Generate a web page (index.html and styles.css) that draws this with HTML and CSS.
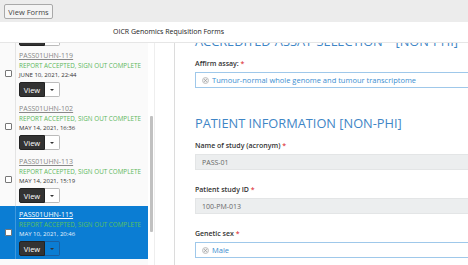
FILE: index.html
```html
<!DOCTYPE html>
<html lang="en">
<head>
    <meta charset="UTF-8">
    <meta name="viewport" content="width=device-width, initial-scale=1.0">
    <title>OICR Genomics Requisition Forms</title>
    <link rel="stylesheet" href="styles.css">
</head>
<body>
    <div class="topbar">
        <button class="forms-btn">View Forms</button>
    </div>
    <div class="title-bar">OICR Genomics Requisition Forms</div>

    <div class="workspace">
        <div class="list-pane">
            <div class="req-list">
                <!-- previous row, scrolled almost out of view -->
                <div class="req-item req-tail">
                    <div class="check-cell"></div>
                    <div class="req-body">
                        <div class="view-group"><span class="view-btn"></span><span class="caret-btn"></span></div>
                    </div>
                </div>
                <div class="req-item">
                    <div class="check-cell"><input type="checkbox" class="row-check"></div>
                    <div class="req-body">
                        <a class="req-name">PASS01UHN-119</a>
                        <div class="req-status">REPORT ACCEPTED, SIGN OUT COMPLETE</div>
                        <div class="req-date">JUNE 10, 2021, 22:44</div>
                        <div class="view-group"><button class="view-btn">View</button><button class="caret-btn"><span class="caret"></span></button></div>
                    </div>
                </div>
                <div class="req-item">
                    <div class="check-cell"><input type="checkbox" class="row-check"></div>
                    <div class="req-body">
                        <a class="req-name">PASS01UHN-102</a>
                        <div class="req-status">REPORT ACCEPTED, SIGN OUT COMPLETE</div>
                        <div class="req-date">MAY 14, 2021, 16:36</div>
                        <div class="view-group"><button class="view-btn">View</button><button class="caret-btn"><span class="caret"></span></button></div>
                    </div>
                </div>
                <div class="req-item">
                    <div class="check-cell"><input type="checkbox" class="row-check"></div>
                    <div class="req-body">
                        <a class="req-name">PASS01UHN-113</a>
                        <div class="req-status">REPORT ACCEPTED, SIGN OUT COMPLETE</div>
                        <div class="req-date">MAY 14, 2021, 15:19</div>
                        <div class="view-group"><button class="view-btn">View</button><button class="caret-btn"><span class="caret"></span></button></div>
                    </div>
                </div>
                <div class="req-item selected">
                    <div class="check-cell"><input type="checkbox" class="row-check"></div>
                    <div class="req-body">
                        <a class="req-name">PASS01UHN-115</a>
                        <div class="req-status">REPORT ACCEPTED, SIGN OUT COMPLETE</div>
                        <div class="req-date">MAY 10, 2021, 20:46</div>
                        <div class="view-group"><button class="view-btn">View</button><button class="caret-btn"><span class="caret"></span></button></div>
                    </div>
                </div>
            </div>
        </div>
        <div class="scroll-track"><div class="scroll-thumb"></div></div>
        <div class="gutter"></div>

        <div class="form-pane">
            <h2 class="section-title cut">ACCREDITED ASSAY SELECTION - [NON-PHI]</h2>
            <div class="field-group">
                <div class="field-label">Affirm assay: <span class="req">*</span></div>
                <div class="field picked">
                    <span class="token">
                        <svg class="clear-icon" width="7" height="7" viewBox="0 0 7 7"><circle cx="3.5" cy="3.5" r="3" fill="#eee" stroke="#b5b5b5" stroke-width="0.8"/><path d="M2.2 2.2L4.8 4.8M4.8 2.2L2.2 4.8" stroke="#999" stroke-width="0.8"/></svg>
                        Tumour-normal whole genome and tumour transcriptome
                    </span>
                </div>
            </div>

            <h2 class="section-title">PATIENT INFORMATION [NON-PHI]</h2>
            <div class="field-group">
                <div class="field-label">Name of study (acronym) <span class="req">*</span></div>
                <div class="field locked">PASS-01</div>
            </div>
            <div class="field-group">
                <div class="field-label">Patient study ID <span class="req">*</span></div>
                <div class="field locked">100-PM-013</div>
            </div>
            <div class="field-group">
                <div class="field-label">Genetic sex <span class="req">*</span></div>
                <div class="field picked">
                    <span class="token">
                        <svg class="clear-icon" width="7" height="7" viewBox="0 0 7 7"><circle cx="3.5" cy="3.5" r="3" fill="#eee" stroke="#b5b5b5" stroke-width="0.8"/><path d="M2.2 2.2L4.8 4.8M4.8 2.2L2.2 4.8" stroke="#999" stroke-width="0.8"/></svg>
                        Male
                    </span>
                </div>
            </div>
        </div>
    </div>
</body>
</html>
```

FILE: styles.css
```css
* {
    box-sizing: border-box;
}
body {
    margin: 0;
    width: 468px;
    height: 265px;
    overflow: hidden;
    font-family: "Open Sans", "Liberation Sans", sans-serif;
    color: #333;
    background: #fff;
}

/* top strip */
.topbar {
    height: 22px;
    padding: 4px 4px 0;
    background: #ececec;
}
.forms-btn {
    display: block;
    width: 49px;
    height: 15px;
    padding: 0;
    font: 7.5px "Open Sans", sans-serif;
    color: #444;
    background: #f4f4f4;
    border: 1px solid #a9a9a9;
    border-radius: 2px;
}
.title-bar {
    height: 21px;
    padding-left: 113px;
    font-size: 7px;
    line-height: 20px;
    color: #222;
    border-bottom: 1px solid #e6e6e6;
}

.workspace {
    display: flex;
    height: 222px;
    overflow: hidden;
}

/* requisition list */
.list-pane {
    flex: none;
    width: 148px;
    overflow: hidden;
    background: #fafafa;
}
.req-list {
    margin-top: -49px;
}
.req-item {
    display: flex;
    height: 53px;
}
.req-tail .req-body {
    padding-top: 35px;
}
.check-cell {
    flex: none;
    width: 16px;
    display: flex;
    align-items: center;
    justify-content: center;
    border-right: 1px solid #e4e4e4;
}
.row-check {
    appearance: none;
    margin: 0 0 0 1px;
    width: 7px;
    height: 7px;
    background: #fff;
    border: 1px solid #777;
    border-radius: 1px;
}
.req-body {
    padding: 3px 0 3px 3px;
}
.req-name {
    display: block;
    font-size: 7px;
    line-height: 11px;
    color: #888;
    text-decoration: underline;
}
.req-status {
    font-size: 6.3px;
    line-height: 9px;
    color: #5cb85c;
    white-space: nowrap;
}
.req-date {
    font-size: 6px;
    line-height: 10px;
    color: #333;
}
.view-group {
    display: flex;
    height: 15px;
    margin-top: 2px;
}
.view-btn {
    display: block;
    width: 26px;
    height: 15px;
    padding: 0;
    font: 7.5px "Open Sans", sans-serif;
    color: #fff;
    background: #333;
    border: 1px solid #222;
    border-radius: 2px 0 0 2px;
}
.caret-btn {
    display: flex;
    align-items: center;
    justify-content: center;
    width: 15px;
    height: 15px;
    padding: 0;
    background: #fff;
    border: 1px solid #bbb;
    border-left: none;
    border-radius: 0 2px 2px 0;
}
.caret {
    border-top: 2px solid #333;
    border-left: 2px solid transparent;
    border-right: 2px solid transparent;
}
.req-item.selected {
    background: #0b7dd3;
}
.selected .check-cell {
    border-right-color: #3d98dd;
}
.selected .req-name {
    color: #fff;
}
.selected .req-status {
    color: #5cc15c;
}
.selected .req-date {
    color: #eaf2fb;
}
.selected .caret-btn {
    background: #0b7dd3;
    border-color: #1b5f9f;
}

.scroll-track {
    flex: none;
    width: 7px;
    padding: 73px 1px 0 2px;
    background: #fff;
    border-right: 1px solid #eee;
}
.scroll-thumb {
    height: 116px;
    background: #c1c1c1;
    border-radius: 1px;
}
.gutter {
    flex: none;
    width: 20px;
    border-right: 1px solid #dcdcdc;
}

/* form */
.form-pane {
    flex: 1;
    overflow: hidden;
    padding-left: 20px;
}
.section-title {
    margin: 25px 0 7px;
    font-size: 12.8px;
    font-weight: 400;
    line-height: 20px;
    color: #3f86c6;
    white-space: nowrap;
}
.section-title.cut {
    margin-top: -12px;
    word-spacing: 1px;
}
.field-group {
    margin-bottom: 14px;
}
.field-label {
    margin-bottom: 3px;
    font-size: 7px;
    font-weight: 600;
    line-height: 11px;
    color: #333;
}
.req {
    color: #e0474c;
}
.field {
    display: flex;
    align-items: center;
    width: 300px;
    height: 16px;
    padding-left: 6px;
    font-size: 7px;
}
.field.picked {
    background: #fff;
    border: 1px solid #9fc8ea;
}
.field.picked .token {
    font-size: 7.5px;
}
.field.locked {
    color: #666;
    background: #eceeef;
    border: 1px solid #e3e5e6;
}
.token {
    display: flex;
    align-items: center;
    gap: 3px;
    color: #3b8ed0;
}
```
